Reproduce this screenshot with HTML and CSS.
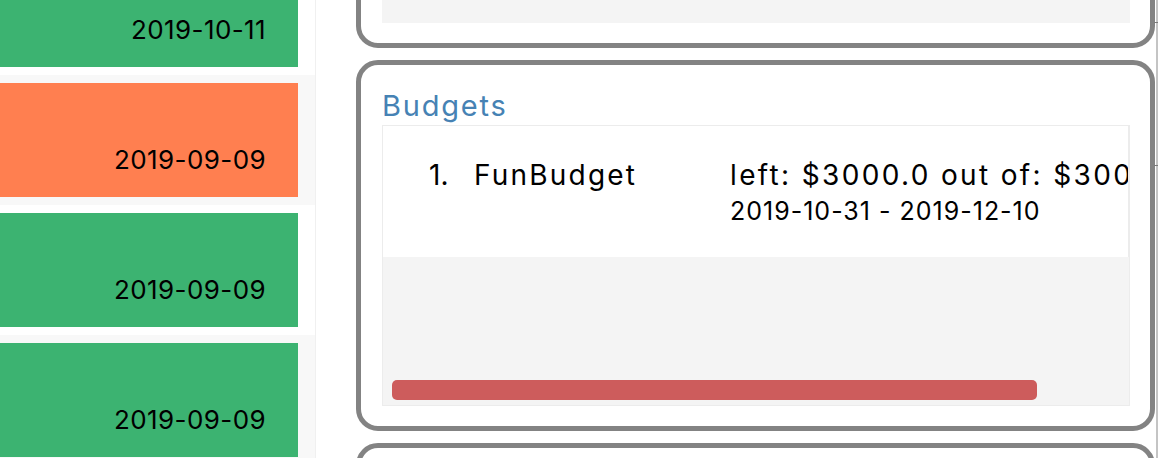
FILE: index.html
```html
<!DOCTYPE html>
<html>
<head>
<meta charset="utf-8">
<link rel="stylesheet" href="styles.css">
</head>
<body>
<div class="app">
  <div class="side">
    <div class="rows">
      <div class="row"><div class="tx tx-green"><span class="date">2019-10-11</span></div></div>
      <div class="row"><div class="tx tx-orange"><span class="date">2019-09-09</span></div></div>
      <div class="row"><div class="tx tx-green"><span class="date">2019-09-09</span></div></div>
      <div class="row"><div class="tx tx-green"><span class="date">2019-09-09</span></div></div>
    </div>
  </div>
  <div class="sep"></div>
  <div class="main">
    <div class="panel panel-prev">
      <div class="panel-fill"></div>
    </div>
    <div class="panel">
      <div class="panel-title">Budgets</div>
      <div class="listview">
        <div class="cell">
          <span class="idx">1.</span>
          <span class="name">FunBudget</span>
          <div class="details">
            <div class="amount">left: $3000.0 out of: $3000.0</div>
            <div class="period">2019-10-31 - 2019-12-10</div>
          </div>
        </div>
        <div class="thumb"></div>
      </div>
    </div>
    <div class="panel panel-next"></div>
  </div>
  <div class="divider">
    <span class="tick tick-a"></span>
    <span class="tick tick-b"></span>
  </div>
</div>
</body>
</html>
```
FILE: styles.css
```css
* { box-sizing: border-box; }
html, body {
  margin: 0;
  padding: 0;
  width: 1158px;
  height: 458px;
  overflow: hidden;
  background: #ffffff;
  font-family: Inter, "Liberation Sans", sans-serif;
  color: #000;
}
.app {
  display: flex;
  width: 1158px;
  height: 458px;
}
.side {
  width: 315px;
  flex: none;
  overflow: hidden;
}
.rows {
  display: flex;
  flex-direction: column;
  margin-top: -55px;
}
.row {
  height: 130px;
  flex: none;
  padding: 8px 17px 8px 0;
  background: #ffffff;
}
.row:nth-child(even) { background: #f8f8f8; }
.tx {
  height: 114px;
  display: flex;
  justify-content: flex-end;
  align-items: flex-end;
  padding: 0 32px 22px 0;
}
.tx-green { background: #3cb371; }
.tx-orange { background: #ff7f50; }
.date {
  font-size: 26px;
  line-height: 31px;
  letter-spacing: 0.4px;
}
.sep {
  width: 1px;
  flex: none;
  background: #f0f0f0;
}
.main {
  flex: 1;
  display: flex;
  flex-direction: column;
  gap: 12px;
  padding: 0 1px 0 40px;
  overflow: hidden;
}
.panel {
  flex: none;
  border: 5px solid #838383;
  border-radius: 22px;
  background: #fff;
  padding: 20px 20px 20px 21px;
}
.panel-prev { margin-top: -102px; }
.panel-fill {
  height: 100px;
  background: #f4f4f4;
}
.panel-next { height: 80px; }
.panel-title {
  height: 40px;
  font-size: 29px;
  line-height: 42px;
  letter-spacing: 1.8px;
  color: #4682b4;
}
.listview {
  position: relative;
  height: 281px;
  background: #f4f4f4;
  border: 1px solid #ececec;
  overflow: hidden;
}
.cell {
  display: flex;
  align-items: flex-start;
  height: 131px;
  background: #fff;
  padding: 32px 0 0 46px;
  border-right: 1px solid #ececec;
  overflow: hidden;
  white-space: nowrap;
}
.idx {
  width: 45px;
  flex: none;
  font-size: 28px;
  line-height: 35px;
}
.name {
  width: 256px;
  flex: none;
  font-size: 28px;
  line-height: 35px;
  letter-spacing: 2.2px;
}
.details {
  flex: none;
}
.amount {
  font-size: 28px;
  line-height: 35px;
  letter-spacing: 2.35px;
}
.period {
  font-size: 25px;
  line-height: 29px;
  margin-top: 4px;
  letter-spacing: 1px;
}
.thumb {
  position: absolute;
  left: 9px;
  bottom: 5px;
  width: 645px;
  height: 20px;
  border-radius: 5px;
  background: #cd5c5c;
}
.divider {
  position: relative;
  width: 2px;
  flex: none;
  background: #c4c4c4;
}
.tick {
  position: absolute;
  left: -2px;
  width: 4px;
  height: 1px;
  background: #7a7a7a;
}
.tick-a { top: 22px; }
.tick-b { top: 165px; }
```
